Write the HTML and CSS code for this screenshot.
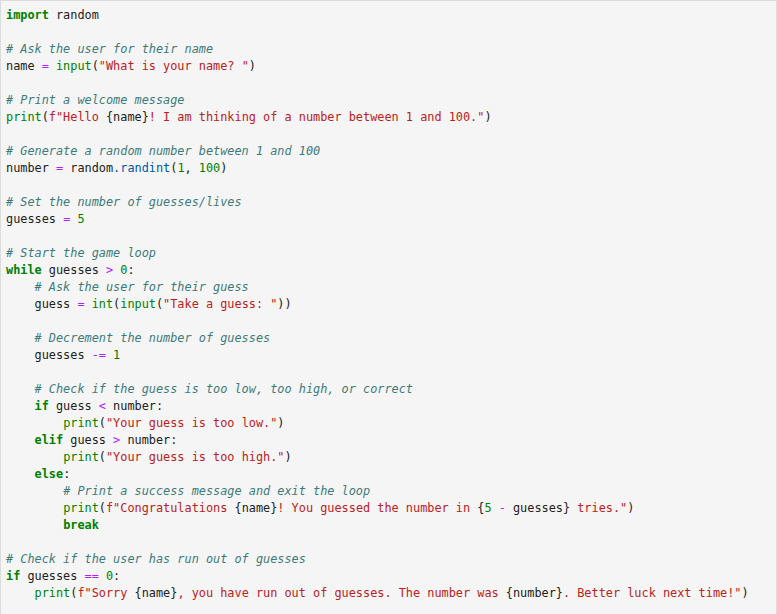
FILE: index.html
```html
<!DOCTYPE html>
<html>
<head>
<meta charset="utf-8">
<link rel="stylesheet" href="styles.css">
</head>
<body>
<div class="cell">
<pre class="code"><span class="k">import</span> random

<span class="c"># Ask the user for their name</span>
name <span class="o">=</span> <span class="b">input</span>(<span class="s">"What is your name? "</span>)

<span class="c"># Print a welcome message</span>
<span class="b">print</span>(<span class="s">f"Hello </span>{name}<span class="s">! I am thinking of a number between 1 and 100."</span>)

<span class="c"># Generate a random number between 1 and 100</span>
number <span class="o">=</span> random<span class="p">.randint</span>(<span class="n">1</span>, <span class="n">100</span>)

<span class="c"># Set the number of guesses/lives</span>
guesses <span class="o">=</span> <span class="n">5</span>

<span class="c"># Start the game loop</span>
<span class="k">while</span> guesses <span class="o">&gt;</span> <span class="n">0</span>:
    <span class="c"># Ask the user for their guess</span>
    guess <span class="o">=</span> <span class="b">int</span>(<span class="b">input</span>(<span class="s">"Take a guess: "</span>))

    <span class="c"># Decrement the number of guesses</span>
    guesses <span class="o">-=</span> <span class="n">1</span>

    <span class="c"># Check if the guess is too low, too high, or correct</span>
    <span class="k">if</span> guess <span class="o">&lt;</span> number:
        <span class="b">print</span>(<span class="s">"Your guess is too low."</span>)
    <span class="k">elif</span> guess <span class="o">&gt;</span> number:
        <span class="b">print</span>(<span class="s">"Your guess is too high."</span>)
    <span class="k">else</span>:
        <span class="c"># Print a success message and exit the loop</span>
        <span class="b">print</span>(<span class="s">f"Congratulations </span>{name}<span class="s">! You guessed the number in </span>{<span class="n">5</span> <span class="o">-</span> guesses}<span class="s"> tries."</span>)
        <span class="k">break</span>

<span class="c"># Check if the user has run out of guesses</span>
<span class="k">if</span> guesses <span class="o">==</span> <span class="n">0</span>:
    <span class="b">print</span>(<span class="s">f"Sorry </span>{name}<span class="s">, you have run out of guesses. The number was </span>{number}<span class="s">. Better luck next time!"</span>)</pre>
</div>
</body>
</html>
```
FILE: styles.css
```css
html, body {
  margin: 0;
  padding: 0;
  background: #ffffff;
}
.cell {
  width: 775px;
  height: 614px;
  background: #f5f5f5;
  border-top: 1px solid #dcdcdc;
  border-left: 1px solid #dcdcdc;
  border-right: 1px solid #dcdcdc;
  box-sizing: content-box;
}
.code {
  margin: 0;
  padding: 6px 0 0 5px;
  font-family: "DejaVu Sans Mono", "Liberation Mono", monospace;
  font-size: 11.86px;
  line-height: 17px;
  color: #212121;
  white-space: pre;
}
.k { color: #008000; font-weight: bold; }
.s { color: #ba2121; }
.c { color: #3d7b7b; font-style: italic; }
.o { color: #aa22ff; }
.n { color: #008000; }
.b { color: #008000; }
.p { color: #0055aa; }
```
